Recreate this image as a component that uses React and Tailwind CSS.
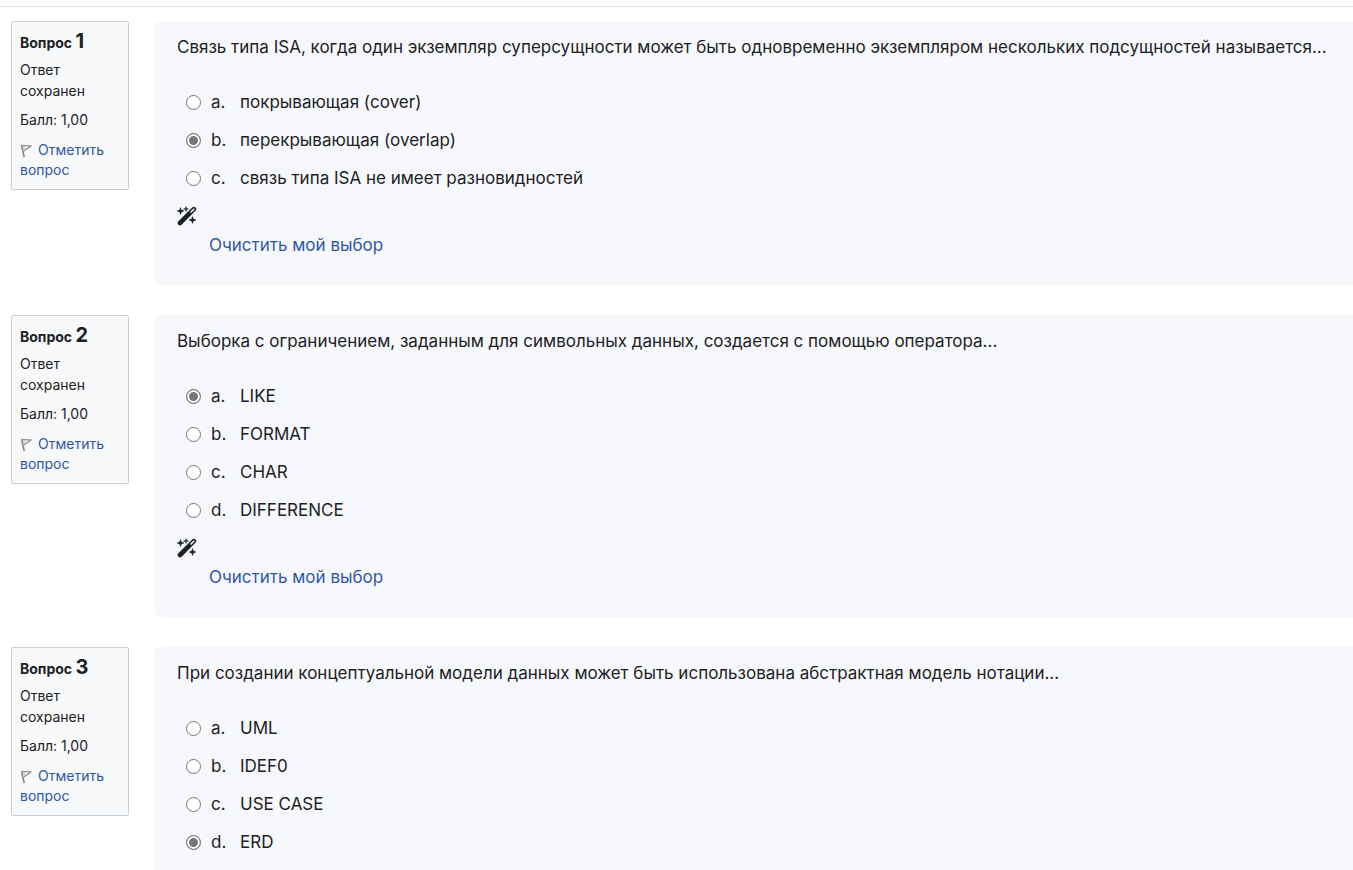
import React, { useState } from 'react';

const QUESTIONS = [
  {
    number: 1,
    text: 'Связь типа ISA, когда один экземпляр суперсущности может быть одновременно экземпляром нескольких подсущностей называется...',
    options: ['покрывающая (cover)', 'перекрывающая (overlap)', 'связь типа ISA не имеет разновидностей'],
    selected: 1,
  },
  {
    number: 2,
    text: 'Выборка с ограничением, заданным для символьных данных, создается с помощью оператора...',
    options: ['LIKE', 'FORMAT', 'CHAR', 'DIFFERENCE'],
    selected: 0,
  },
  {
    number: 3,
    text: 'При создании концептуальной модели данных может быть использована абстрактная модель нотации...',
    options: ['UML', 'IDEF0', 'USE CASE', 'ERD'],
    selected: 3,
  },
];

function FlagIcon() {
  return (
    <svg viewBox="0 0 12 14" className="mr-[6px] inline-block h-[14px] w-3 align-[-3px]" fill="none" aria-hidden="true">
      <path d="M1.6 1.6 4.2 13" stroke="#8a8a8a" strokeWidth="1.7" />
      <path d="M1 1.6 11.2 1.9 4 7" stroke="#999" strokeWidth="1.5" strokeLinejoin="round" />
      <path d="M3.4 3.2 5.4 5.8" stroke="#bbb" strokeWidth="1.2" />
    </svg>
  );
}

function WandIcon() {
  return (
    <svg viewBox="0 0 20 20" className="h-5 w-5" aria-hidden="true">
      <path d="M3 17 16.8 3.2" stroke="#1d2125" strokeWidth="4.6" strokeLinecap="round" />
      <path d="M14 6 16.8 3.2" stroke="#f7f8fc" strokeWidth="1.6" strokeLinecap="round" />
      <path
        d="M3.5 1.5 4.4 4.1 7 5 4.4 5.9 3.5 8.5 2.6 5.9 0 5 2.6 4.1ZM9 .5 9.6 2.4 11.5 3 9.6 3.6 9 5.5 8.4 3.6 6.5 3 8.4 2.4ZM15.5 10.5 16.4 13.1 19 14 16.4 14.9 15.5 17.5 14.6 14.9 12 14 14.6 13.1Z"
        fill="#1d2125"
        stroke="#1d2125"
        strokeWidth=".5"
      />
    </svg>
  );
}

function Question({ question }) {
  const [selected, setSelected] = useState(question.selected);
  const name = `question-${question.number}`;
  return (
    <section className="flex items-start gap-[25px]">
      <div className="w-[118px] shrink-0 rounded-xs border border-[#cad0d7] bg-[#f8f9fa] px-2 pt-[6px] pb-[9px] text-sm leading-[21px]">
        <h3 className="text-sm leading-[26px] font-bold">
          Вопрос <span className="text-xl leading-[26px]">{question.number}</span>
        </h3>
        <p className="mt-[3px]">Ответ сохранен</p>
        <p className="mt-2">Балл: 1,00</p>
        <a href="#flag" className="mt-[10px] block leading-5 text-[#2f57a5]">
          <FlagIcon />
          Отметить вопрос
        </a>
      </div>
      <form className="min-w-0 flex-1 rounded-l-lg bg-[#f7f8fc] px-[23px] pt-[13px] pb-[27px]">
        <fieldset>
          <legend className="float-left mb-6 w-full leading-[26px]">{question.text}</legend>
          <div className="clear-both">
            {question.options.map((option, index) => (
              <label key={option} className="flex h-[38px] items-center pl-[9px]">
                <input
                  type="radio"
                  name={name}
                  checked={selected === index}
                  onChange={() => setSelected(index)}
                  className="mb-[2px] h-[15px] w-[15px] appearance-none rounded-full border border-[#767676] bg-white checked:border-[#767676] checked:bg-[#767676] checked:shadow-[inset_0_0_0_2px_white]"
                />
                <span className="ml-[10px] w-[29px]">{'abcd'[index]}.</span>
                <span>{option}</span>
              </label>
            ))}
          </div>
        </fieldset>
        <div className="mt-2">
          <WandIcon />
        </div>
        <button type="button" onClick={() => setSelected(null)} className="mt-[6px] ml-8 block h-[26px] leading-[26px] text-[#2f57a5]">
          Очистить мой выбор
        </button>
      </form>
    </section>
  );
}

export default function App() {
  return (
    <div className="h-screen overflow-y-auto bg-white pt-[6px] font-[Inter,'Liberation_Sans',sans-serif] text-[17px] text-[#1d2125] [scrollbar-width:none]">
      <main className="flex flex-col gap-[30px] border-t border-[#dee2e6] pt-[14px] pl-[11px]">
        {QUESTIONS.map((question) => (
          <Question key={question.number} question={question} />
        ))}
      </main>
    </div>
  );
}
